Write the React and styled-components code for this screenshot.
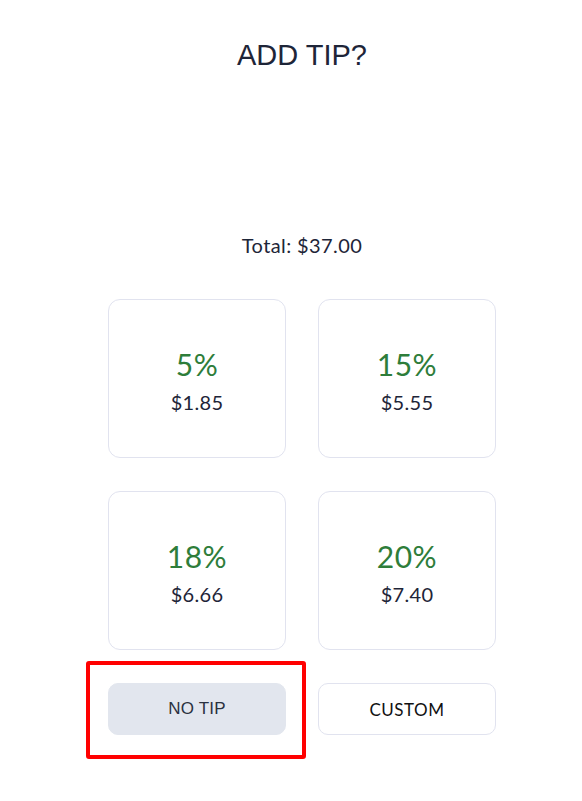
import React from "react";
import styled, { createGlobalStyle } from "styled-components";

const Global = createGlobalStyle`
  body {
    margin: 0;
    background: #ffffff;
    font-family: Lato, "Noto Sans", sans-serif;
  }
`;

const Page = styled.main`
  display: flex;
  flex-direction: column;
  align-items: center;
  padding-left: 22px;
  min-height: 801px;
  box-sizing: border-box;
`;

const Title = styled.h1`
  margin: 38px 0 0;
  font-family: "Liberation Sans", Arial, sans-serif;
  font-weight: 400;
  font-size: 29px;
  line-height: 35px;
  color: #1e2538;
`;

const Total = styled.p`
  margin: 160px 0 0;
  font-size: 20px;
  line-height: 24px;
  color: #1e2538;
  letter-spacing: 0.4px;
`;

const Grid = styled.div`
  margin-top: 42px;
  display: grid;
  grid-template-columns: 178px 178px;
  column-gap: 32px;
  row-gap: 33px;
`;

const Card = styled.button`
  height: 159px;
  display: flex;
  flex-direction: column;
  align-items: center;
  justify-content: center;
  gap: 8px;
  padding: 2px 0 0;
  background: #fff;
  border: 1px solid #e1e3ef;
  border-radius: 12px;
  font-family: inherit;
  cursor: pointer;
`;

const Percent = styled.span`
  font-size: 30px;
  line-height: 36px;
  color: #2e7d3a;
  letter-spacing: 0.5px;
`;

const Amount = styled.span`
  font-size: 20px;
  line-height: 24px;
  color: #1e2538;
  letter-spacing: 0.3px;
`;

const Cell = styled.div`
  position: relative;
`;

const Action = styled.button`
  width: 100%;
  height: 52px;
  border-radius: 10px;
  border: 1px solid ${p => (p.$muted ? "#e2e6ee" : "#e1e3ef")};
  background: ${p => (p.$muted ? "#e2e6ee" : "#fff")};
  color: ${p => (p.$muted ? "#2a3140" : "#111")};
  font-family: ${p => (p.$muted ? '"Liberation Sans", Arial, sans-serif' : "inherit")};
  font-size: 17px;
  letter-spacing: ${p => (p.$muted ? "0.2px" : "0.5px")};
  cursor: pointer;
`;

const Highlight = styled.span`
  position: absolute;
  top: -22px;
  left: -22px;
  right: -20px;
  bottom: -24px;
  border: 4px solid #ff0000;
  border-radius: 3px;
  pointer-events: none;
`;

const tips = [
  { pct: "5%", amt: "$1.85" },
  { pct: "15%", amt: "$5.55" },
  { pct: "18%", amt: "$6.66" },
  { pct: "20%", amt: "$7.40" },
];

export default function App() {
  return (
    <Page>
      <Global />
      <Title>ADD TIP?</Title>
      <Total>Total: $37.00</Total>
      <Grid>
        {tips.map(t => (
          <Card key={t.pct}>
            <Percent>{t.pct}</Percent>
            <Amount>{t.amt}</Amount>
          </Card>
        ))}
        <Cell>
          <Action $muted>NO TIP</Action>
          <Highlight />
        </Cell>
        <Cell>
          <Action>CUSTOM</Action>
        </Cell>
      </Grid>
    </Page>
  );
}
